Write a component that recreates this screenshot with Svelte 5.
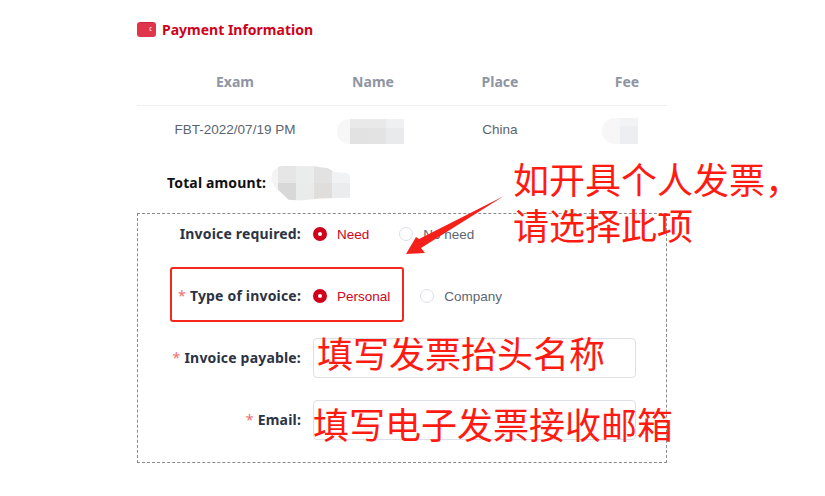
<script>
  const columns = ['Exam', 'Name', 'Place', 'Fee'];
</script>

<div class="page">
  <div class="title">
    <svg class="wallet" width="19" height="15" viewBox="0 0 19 15">
      <rect width="19" height="15" rx="3" fill="#e0364c" />
      <path d="M3 .5h13" stroke="#c4283e" stroke-width="1" />
      <path d="M14.5 5.5h-1.5v3h1.5" fill="none" stroke="#f6c4cb" stroke-width="1" />
    </svg>
    <span>Payment Information</span>
  </div>

  <div class="table">
    {#each columns as col}
      <div class="th">{col}</div>
    {/each}
    <div class="td">FBT-2022/07/19 PM</div>
    <div class="td">
      <div class="mosaic name">
        <i style="background:#f7f7f7"></i><i style="background:#e9e9ea"></i><i style="background:#e9e9ea"></i><i style="background:#eff0f2"></i>
        <i style="background:#f7f7f7"></i><i style="background:#e2e2e3"></i><i style="background:#e3e3e4"></i><i style="background:#e9eaeb"></i>
      </div>
    </div>
    <div class="td">China</div>
    <div class="td">
      <div class="mosaic fee">
        <i style="background:#f7f7f7"></i><i style="background:#f2f3f5"></i>
        <i style="background:#f7f7f7"></i><i style="background:#eceef1"></i>
      </div>
    </div>
  </div>

  <div class="total">
    <span class="total-label">Total amount:</span>
    <div class="mosaic amount">
      <i style="background:#f4f4f4"></i><i style="background:#e6e6e6"></i><i style="background:#ebecec"></i><i style="background:#e2e2e2"></i><i style="background:#f1f2f3"></i>
      <i style="background:#f4f4f4"></i><i style="background:#d8d8d8"></i><i style="background:#eaebeb"></i><i style="background:#dfdedd"></i><i style="background:#ebecee"></i>
    </div>
  </div>

  <div class="form">
    <div class="row">
      <div class="label">Invoice required:</div>
      <div class="radios">
        <span class="radio on">Need</span>
        <span class="radio">No need</span>
      </div>
    </div>
    <div class="row">
      <div class="label"><b>*</b>Type of invoice:</div>
      <div class="radios">
        <span class="radio on">Personal</span>
        <span class="radio">Company</span>
      </div>
    </div>
    <div class="row">
      <div class="label"><b>*</b>Invoice payable:</div>
      <div class="input"></div>
    </div>
    <div class="row">
      <div class="label"><b>*</b>Email:</div>
      <div class="input"></div>
    </div>
  </div>

  <!-- annotations drawn on top of the form -->
  <div class="highlight"></div>
  <svg class="arrow" width="120" height="70" viewBox="395 190 120 70">
    <path d="M504 196L419 239L416 237L406 254L425 253L421 248Z" fill="#f5201a" />
  </svg>
  <div class="note note-a">如开具个人发票，<br />请选择此项</div>
  <div class="note note-b">填写发票抬头名称</div>
  <div class="note note-c">填写电子发票接收邮箱</div>
</div>

<style>
  :global(body) {
    margin: 0;
    background: #fff;
  }
  .page {
    position: relative;
    width: 825px;
    height: 496px;
    overflow: hidden;
    box-sizing: border-box;
    padding: 20px 0 0 137px;
    font-family: "Liberation Sans", "Noto Sans CJK SC", sans-serif;
    font-size: 13.5px;
    color: #5c6370;
  }
  .title {
    display: flex;
    align-items: center;
    gap: 6px;
    height: 18px;
    color: #d0021b;
    font-family: "Noto Sans", sans-serif;
    font-size: 14px;
    font-weight: 700;
  }
  .table {
    display: grid;
    grid-template-columns: 196px 80px 174px 80px;
    width: 530px;
    margin-top: 21px;
  }
  .th {
    display: flex;
    align-items: center;
    justify-content: center;
    height: 44px;
    padding-bottom: 2px;
    border-bottom: 1px solid #eceef2;
    color: #8f95a3;
    font-family: "Noto Sans", sans-serif;
    font-size: 14px;
    font-weight: 700;
  }
  .td {
    display: flex;
    align-items: center;
    justify-content: center;
    height: 47px;
  }
  .mosaic {
    display: grid;
    overflow: hidden;
  }
  .mosaic i {
    display: block;
  }
  .name {
    grid-template-columns: 13px repeat(3, 18px);
    grid-template-rows: 9px 16px;
    width: 67px;
    height: 25px;
    margin: 3px 5px 0 0;
    border-radius: 12px 0 0 12px;
  }
  .fee {
    grid-template-columns: 18px 18px;
    grid-template-rows: 8px 18px;
    width: 36px;
    height: 26px;
    margin: 2px 14px 0 0;
    border-radius: 13px 0 0 13px;
  }
  .total {
    display: flex;
    align-items: center;
    height: 32px;
    margin-top: 14px;
    padding-left: 30px;
  }
  .total-label {
    padding-bottom: 2px;
    color: #111;
    font-family: "Noto Sans", sans-serif;
    font-size: 14px;
    font-weight: 700;
    letter-spacing: 0.15px;
  }
  .amount {
    grid-template-columns: 7px repeat(4, 18px);
    grid-template-rows: 17px 18px;
    width: 79px;
    height: 35px;
    margin-left: 5px;
    clip-path: polygon(10% 3%, 20% 0, 55% 2%, 72% 8%, 80% 18%, 97% 22%, 100% 30%, 100% 92%, 62% 94%, 38% 100%, 22% 98%, 14% 80%, 4% 60%, 0 40%, 2% 18%);
  }
  .form {
    box-sizing: border-box;
    width: 530px;
    height: 250px;
    margin-top: 14px;
    padding-bottom: 22px;
    border: 1px dashed #8a8a8a;
    display: flex;
    flex-direction: column;
    gap: 22px;
  }
  .row {
    display: flex;
    align-items: center;
    height: 40px;
  }
  .label {
    width: 163px;
    padding-bottom: 2px;
    text-align: right;
    color: #2c3344;
    font-family: "Noto Sans", sans-serif;
    font-size: 14px;
    font-weight: 700;
    letter-spacing: 0.18px;
  }
  .label b {
    color: #f56c6c;
    font-weight: 400;
    margin-right: 4px;
  }
  .radios {
    display: flex;
    margin-left: 12px;
  }
  .radio {
    display: flex;
    align-items: center;
    gap: 10px;
    margin-right: 30px;
    color: #606672;
  }
  .radio::before {
    content: "";
    box-sizing: border-box;
    width: 14px;
    height: 14px;
    border: 1px solid #dcdfe6;
    border-radius: 50%;
    background: #fff;
  }
  .radio.on {
    color: #d0021b;
  }
  .radio.on::before {
    border: 5px solid #d0021b;
  }
  .input {
    box-sizing: border-box;
    width: 323px;
    height: 40px;
    margin-left: 12px;
    border: 1px solid #dcdfe6;
    border-radius: 4px;
  }
  .highlight {
    position: absolute;
    left: 170px;
    top: 267px;
    width: 234px;
    height: 55px;
    box-sizing: border-box;
    border: 2px solid #f5281e;
    border-radius: 3px;
  }
  .arrow {
    position: absolute;
    left: 395px;
    top: 190px;
  }
  .note {
    position: absolute;
    color: #ff1a12;
    font-family: "Noto Sans CJK SC", sans-serif;
    font-size: 36px;
    line-height: 46px;
    white-space: nowrap;
  }
  .note-a {
    left: 513px;
    top: 155px;
  }
  .note-b {
    left: 317px;
    top: 329px;
  }
  .note-c {
    left: 313px;
    top: 400px;
  }
</style>
